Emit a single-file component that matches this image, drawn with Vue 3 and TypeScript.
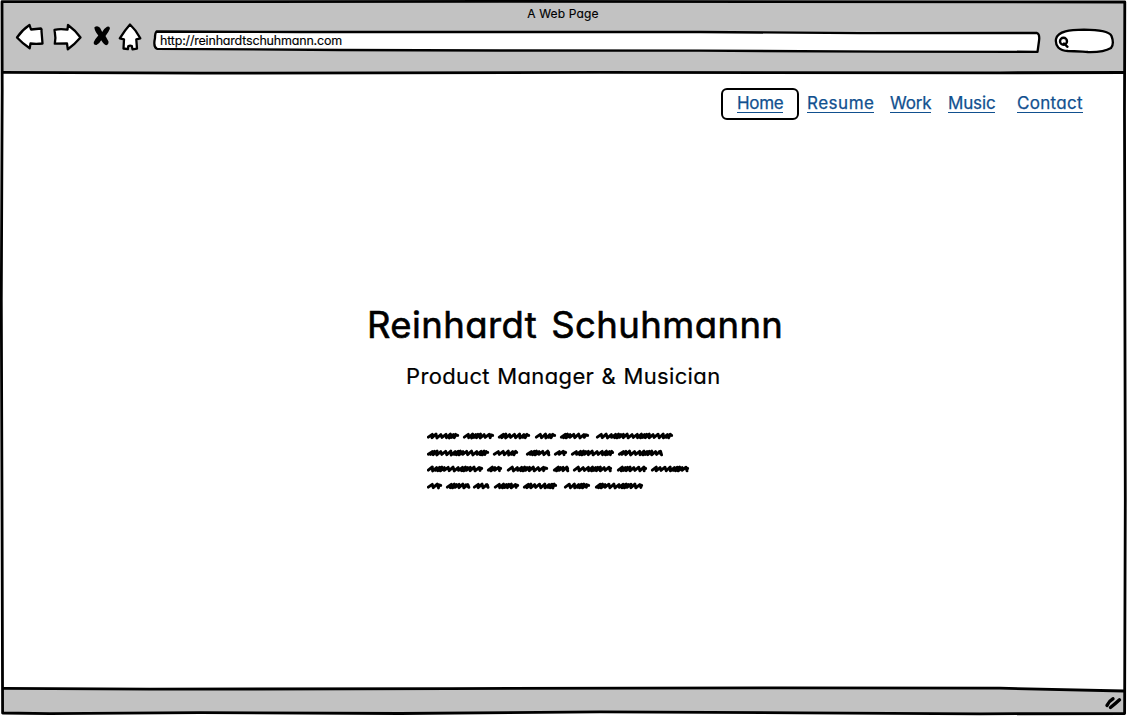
<script setup lang="ts">
interface NavLink {
  label: string
  key: string
  active?: boolean
}

const links: NavLink[] = [
  { label: 'Home', key: 'home', active: true },
  { label: 'Resume', key: 'resume' },
  { label: 'Work', key: 'work' },
  { label: 'Music', key: 'music' },
  { label: 'Contact', key: 'contact' },
]

// Horizontal extents of each scribbled word, row by row
const rows: { y: number; words: [number, number][] }[] = [
  { y: 9, words: [[0, 32], [36, 67], [71, 103], [108, 129], [133, 162], [169, 246]] },
  { y: 26, words: [[0, 62], [66, 91], [99, 123], [127, 140], [144, 187], [191, 235]] },
  { y: 42, words: [[0, 56], [60, 75], [80, 121], [126, 142], [146, 185], [190, 220], [224, 262]] },
  { y: 59, words: [[0, 15], [19, 42], [46, 62], [67, 92], [96, 130], [137, 163], [168, 216]] },
]

function scribble(y: number, start: number, end: number, seed: number): string {
  let x = start + 1.3
  let d = `M${x} ${y + 1.2}`
  let i = seed
  while (x < end - 5) {
    const step = 3.7 + 1.5 * Math.sin(i * 0.9)
    const peak = 1.7 + 0.3 * Math.sin(i * 2.1)
    d += `L${(x + 4).toFixed(1)} ${(y - peak).toFixed(1)}L${(x + step).toFixed(1)} ${(y + peak).toFixed(1)}`
    x += step
    i++
  }
  return d + `L${end - 3} ${y - 1.2}L${end - 1.3} ${y - 0.6}`
}

const strokes = rows.flatMap((row, r) =>
  row.words.map(([a, b], w) => scribble(row.y, a, b, r * 5 + w * 3)),
)
</script>

<template>
  <div class="window">
    <svg class="frame" viewBox="0 0 1127 716" aria-hidden="true">
      <path class="chrome" d="M2.500 1.500L1125 2.500V73L600 72.500L200 73.200L2 72.500Z" />
      <path class="chrome" d="M3 688.400L300 689L780 687.700L1000 688.500L1124 691V713.500L800 712.800L600 712L400 713.500L200 712.600L50 713.800L3 713Z" />
      <path class="edge" d="M2 1.700L500 1.400L1124.800 2L1124.500 110L1125.300 500L1124.600 713.500L980 713.800L800 712.800L600 711.800L400 713.500L200 712.700L50 713.600L2.600 713L2 500L1.300 300L2.200 90Z" />
      <path class="edge" d="M2 72.300L200 73.200L600 72.400L1000 72.800L1124 72.500" />
      <path class="edge" d="M3 688.300L150 689.200L450 688.600L780 687.800L1000 688.200L1124 691" />
    </svg>

    <header class="toolbar">
      <div class="page-title"><span>A Web Page</span></div>
      <div class="controls">
        <svg class="icons" width="134" height="34" viewBox="12 20 134 34" aria-hidden="true">
          <path class="icon" d="M17 37.500Q22 30 29.500 25L31 29.500L41 28.500Q42 29 41.500 31L42.500 43.500Q36 44.300 30.500 43.500L29.700 48.300Q22 43 17 37.500Z" />
          <path class="icon" d="M80.500 37.500Q75 30 68 25L67.500 29.600Q60 28.500 54.500 29.800L54.800 32Q56 38 54.800 43.700L67 43.500L67.800 49.300Q75 44 80.500 37.500Z" />
          <path class="cross" d="M94.400 27.200Q97.500 24.800 100 27.800L102.200 32Q104 28.500 107 26.800Q110 25.800 109.900 28.800Q108.500 32.500 105.500 36L108.500 41.500Q108.800 44.800 106.200 45.200Q104 44.500 101.200 40.200Q99.500 43.500 96.500 45Q93.200 45.200 93.800 42Q95.500 38.500 98.300 35.500Q94.300 30.500 94.400 27.200Z" />
          <path class="icon" d="M130 24.500Q125 30 119.800 38.300L124 39.300L123.500 48.500L127.800 49.200L128.300 46.200Q130 45 131.800 46L132.500 49.300L137 48.700L136.300 39.300L140.300 38.300Q136 30 130 24.500Z" />
        </svg>
        <div class="address">
          <svg class="shape" width="890" height="26" viewBox="152 28 890 26" aria-hidden="true">
            <path class="field" d="M156.500 31.500L300 32L700 32L860 33.200L1037 33Q1040 34 1039 41L1037.500 51.800L880 51.600L700 50.700L500 50.500L340 50L157 48.800Q153 47 155 38Q155 33 156.500 31.500Z" />
          </svg>
          <span class="url">http://reinhardtschuhmann.com</span>
        </div>
        <svg class="search" width="62" height="28" viewBox="1053 27 62 28" aria-hidden="true">
          <path class="field" d="M1056 39C1058 31 1070 30 1084 29.700C1098 29.800 1109 31 1111.500 36C1113 40 1113.500 45 1111 48C1105 51.500 1096 52.200 1088 52C1080 51.500 1075 51 1068 51C1059 50.500 1055 46 1056 39Z" />
          <circle class="lens" cx="1063.500" cy="41.300" r="3.500" />
          <path class="lens" d="M1064 43.500L1067.500 46.800" />
        </svg>
      </div>
    </header>

    <main class="page">
      <nav class="nav">
        <a
          v-for="link in links"
          :key="link.key"
          :class="['item', link.key, { active: link.active }]"
        ><span class="label">{{ link.label }}</span></a>
      </nav>
      <section class="hero">
        <h1>Reinhardt Schuhmannn</h1>
        <h2>Product Manager &amp; Musician</h2>
        <svg class="scribbles" width="264" height="70" viewBox="0 0 264 70" aria-hidden="true">
          <path v-for="(d, i) in strokes" :key="i" :d="d" />
        </svg>
      </section>
    </main>

    <footer class="status">
      <svg width="18" height="16" viewBox="1104 695 18 16" aria-hidden="true">
        <path class="grip" d="M1107 705.500Q1109 701 1113 698.800M1110.500 707.500Q1115 704 1119.500 699.800" />
      </svg>
    </footer>
  </div>
</template>

<style>
body {
  margin: 0;
  background: #fff;
}
</style>

<style scoped>
.window {
  position: relative;
  display: flex;
  flex-direction: column;
  width: 1127px;
  height: 716px;
  overflow: hidden;
  color: #000;
  font-family: Inter, Lato, sans-serif;
  font-feature-settings: 'cv11', 'ss03';
  font-weight: 400;
}
.frame {
  position: absolute;
  inset: 0;
  width: 1127px;
  height: 716px;
}
.chrome {
  fill: #c2c2c2;
}
.edge {
  fill: none;
  stroke: #000;
  stroke-width: 2.8;
  stroke-linejoin: round;
}
.toolbar {
  position: relative;
  height: 73px;
  flex: none;
}
.page-title {
  height: 20px;
  padding: 6px 1px 0 0;
  box-sizing: border-box;
  text-align: center;
  font-size: 12px;
  line-height: 15px;
  letter-spacing: 0.15px;
  white-space: nowrap;
  -webkit-text-stroke: 0.15px #000;
}
.controls {
  display: flex;
  padding-left: 12px;
}
.icons {
  display: block;
}
.icon {
  fill: #fff;
  stroke: #000;
  stroke-width: 2.3;
  stroke-linejoin: round;
}
.cross {
  fill: #000;
}
.address {
  display: grid;
  width: 890px;
  height: 26px;
  margin: 8px 0 0 6px;
}
.shape,
.url {
  grid-area: 1 / 1;
}
.url {
  z-index: 1;
  padding: 5px 0 0 8px;
  font-size: 12.5px;
  line-height: 15px;
  letter-spacing: -0.19px;
  white-space: nowrap;
  -webkit-text-stroke: 0.15px #000;
}
.field {
  fill: #fff;
  stroke: #000;
  stroke-width: 2.3;
  stroke-linejoin: round;
}
.search {
  margin: 7px 0 0 11px;
}
.lens {
  fill: none;
  stroke: #000;
  stroke-width: 2.4;
  stroke-linecap: round;
}
.page {
  position: relative;
  flex: 1;
}
.nav {
  display: flex;
  justify-content: flex-end;
  align-items: flex-start;
  padding: 15px 44px 0 0;
  font-size: 17px;
  line-height: 20px;
  color: #11508f;
  -webkit-text-stroke: 0.25px #11508f;
}
.item {
  box-sizing: border-box;
  padding-top: 5px;
}
.label {
  display: block;
  height: 19px;
  border-bottom: 1px solid #11508f;
  white-space: nowrap;
}
.active {
  height: 32px;
  padding: 3px 14px 0;
  border: 2px solid #000;
  border-radius: 6px;
}
.home .label { width: 46px; letter-spacing: -0.3px; }
.resume { width: 67px; margin-left: 8px; letter-spacing: 0.5px; }
.work { width: 41px; margin-left: 16px; letter-spacing: -0.15px; }
.music { width: 47px; margin-left: 17px; letter-spacing: -0.15px; }
.contact { width: 66px; margin-left: 22px; letter-spacing: 0.3px; }
.hero {
  display: flex;
  flex-direction: column;
  align-items: flex-start;
  padding: 182px 0 0 366px;
}
h1,
h2 {
  margin: 0;
  font-weight: 400;
  white-space: nowrap;
}
h1 {
  margin-left: 1px;
  font-size: 36.5px;
  line-height: 46px;
  letter-spacing: 0.4px;
  word-spacing: 3.5px;
  -webkit-text-stroke: 0.6px #000;
}
h2 {
  margin: 14px 0 0 40px;
  font-size: 22px;
  line-height: 28px;
  letter-spacing: 0.36px;
  word-spacing: 0.8px;
  -webkit-text-stroke: 0.2px #000;
}
.scribbles {
  margin: 37px 0 0 61px;
}
.scribbles path {
  fill: none;
  stroke: #000;
  stroke-width: 2.9;
  stroke-linecap: round;
  stroke-linejoin: round;
}
.status {
  position: relative;
  display: flex;
  justify-content: flex-end;
  height: 28px;
  padding: 7px 5px 0 0;
  box-sizing: border-box;
}
.grip {
  fill: none;
  stroke: #000;
  stroke-width: 3.4;
  stroke-linecap: round;
}
</style>
